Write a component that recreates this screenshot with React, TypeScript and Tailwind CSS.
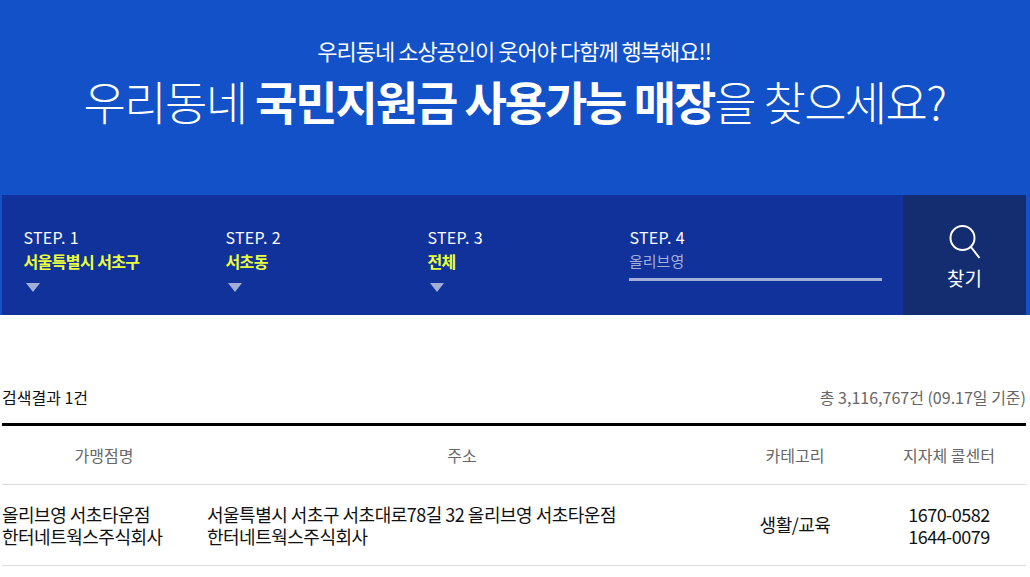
const steps = [
  ['STEP. 1', '서울특별시 서초구'],
  ['STEP. 2', '서초동'],
  ['STEP. 3', '전체'],
]

const th = 'h-[59px] flex items-center justify-center border-b border-[#ddd] text-[16px] text-[#666]'
const td = 'h-[81px] flex flex-col justify-center border-b border-[#ddd]'

export default function App() {
  return (
    <div className="w-[1030px] h-[577px] overflow-hidden bg-white font-['Noto_Sans_CJK_KR',sans-serif] text-[#222]">
      <div className="bg-[#1351c8] text-white text-center">
        <div className="h-[195px]">
          <p className="pt-[33px] pr-[2px] text-[22px] leading-[34px] tracking-[-1px]">우리동네 소상공인이 웃어야 다함께 행복해요!!</p>
          <h1 className="mt-[2px] pr-[1px] text-[46px] leading-[62px] font-light tracking-[-1.6px]">
            우리동네 <b className="font-bold tracking-[-2.1px]">국민지원금 사용가능 매장</b>을 찾으세요?
          </h1>
        </div>
        <div className="h-[120px] ml-[2px] mr-[4px] flex bg-[#10329a] text-left">
          {steps.map(([s, v]) => (
            <div key={s} className="w-[202px] pl-[21.5px] pt-[31px]">
              <p className="text-[16px] leading-[22px] tracking-[0.3px] text-white">{s}</p>
              <p className="mt-[1px] text-[16px] leading-[24px] font-bold text-[#eaff3c] tracking-[-0.6px]">{v}</p>
              <div className="mt-[10px] ml-[2.5px] w-0 h-0 border-x-[7px] border-x-transparent border-t-[9px] border-t-[#a3aed8]" />
            </div>
          ))}
          <div className="w-[295px] pl-[21px] pr-[21px] pt-[31px]">
            <p className="pl-[0.5px] text-[16px] leading-[22px] tracking-[0.3px] text-white">STEP. 4</p>
            <p className="h-[33px] pt-[1px] border-b-[3px] border-[#a3aed8] text-[15px] leading-[24px] text-[#a3aed8]">올리브영</p>
          </div>
          <div className="flex-1 bg-[#142c70] flex flex-col items-center pt-[30px] text-white">
            <svg width="34" height="36" viewBox="0 0 34 36" fill="none" stroke="white" strokeWidth="2">
              <circle cx="14.5" cy="13" r="12" />
              <path d="M23 22 L31.5 33" />
            </svg>
            <span className="mt-[2px] text-[19px] leading-[30px]">찾기</span>
          </div>
        </div>
      </div>
      <div className="pl-[2px] pr-[4px]">
        <div className="mt-[65px] h-[46px] flex justify-between border-b-[3px] border-black text-[16px] leading-[34px] text-[#111]">
          <span>검색결과 1건</span>
          <span className="text-[#666]">총 3,116,767건 (09.17일 기준)</span>
        </div>
        <div className="grid grid-cols-[204px_512px_154px_154px]">
          <div className={th}>가맹점명</div>
          <div className={th}>주소</div>
          <div className={th}>카테고리</div>
          <div className={th}>지자체 콜센터</div>
          <div className="contents text-[18px] leading-[22px] text-[#111] tracking-[-0.5px]">
            <div className={td}>
              <p>올리브영 서초타운점</p>
              <p>한터네트웍스주식회사</p>
            </div>
            <div className={`${td} pl-[1px]`}>
              <p>서울특별시 서초구 서초대로78길 32 올리브영 서초타운점</p>
              <p>한터네트웍스주식회사</p>
            </div>
            <div className={`${td} items-center pb-[2px]`}>생활/교육</div>
            <div className={`${td} items-center`}>
              <p>1670-0582</p>
              <p>1644-0079</p>
            </div>
          </div>
        </div>
      </div>
    </div>
  )
}
